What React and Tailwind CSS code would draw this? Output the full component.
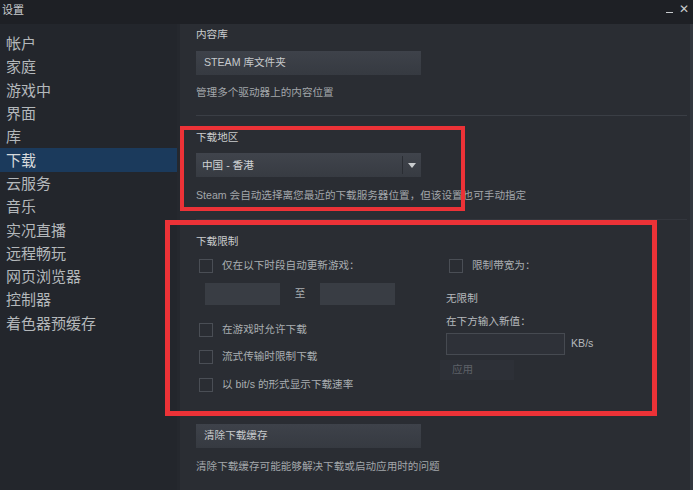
import React from "react";

const font = { fontFamily: '"Liberation Sans", "Noto Sans CJK SC", sans-serif' };

const navItems = ["帐户", "家庭", "游戏中", "界面", "库", "下载", "云服务", "音乐", "实况直播", "远程畅玩", "网页浏览器", "控制器", "着色器预缓存"];

function Checkbox() {
  return <div className="w-[14px] h-[14px] border border-[#4a4e55] bg-[#2a2d33] shrink-0" />;
}

function GrayButton({ children }) {
  return (
    <div className="w-[225px] h-[24px] bg-gradient-to-b from-[#3e424a] to-[#363a41] flex items-center pl-[8px] text-[10.6px] text-[#c6c9cc]">
      {children}
    </div>
  );
}

export default function App() {
  return (
    <div className="w-[693px] h-[490px] bg-[#2a2d33] overflow-hidden relative flex flex-col text-[#b6babd] text-[10.6px]" style={font}>
      {/* title bar */}
      <div className="h-[24px] bg-[#1e2025] flex items-center justify-between px-[2px] shrink-0">
        <span className="text-[11px] text-[#c8cbce] -mt-[4px]">设置</span>
        <div className="flex items-center gap-[6px] pr-[2px] -mt-[6px] text-[#c8cbce]">
          <span className="w-[7px] h-[1px] bg-[#c8cbce] mt-[6px]" />
          <span className="text-[12px] leading-none">✕</span>
        </div>
      </div>
      <div className="flex flex-1 min-h-0">
        {/* sidebar */}
        <div className="w-[177px] bg-[#23262c] pt-[8px] shrink-0">
          {navItems.map((n) => (
            <div
              key={n}
              className={`h-[23.3px] flex items-center pl-[6px] text-[15px] leading-none ${n === "下载" ? "bg-[#1b3a5c] text-[#d7dadc]" : "text-[#b4b8bb]"}`}
            >
              {n}
            </div>
          ))}
        </div>
        <div className="w-[3px] bg-[#25282e] shrink-0" />
        {/* main */}
        <div className="flex-1 pl-[16px] pr-[3px] flex flex-col">
          <div className="pt-[3px] text-[#c9ccce] h-[19px] flex items-center">内容库</div>
          <div className="mt-[8px]">
            <GrayButton>STEAM 库文件夹</GrayButton>
          </div>
          <div className="mt-[10px] text-[#a2a6aa]">管理多个驱动器上的内容位置</div>
          <div className="mt-[14px] h-[1px] bg-[#3a3e45]" />

          <div className="mt-[16px] text-[#c9ccce] leading-none">下载地区</div>
          <div className="mt-[11px] w-[225px] h-[24px] bg-gradient-to-b from-[#40444c] to-[#373b42] flex items-center text-[#d0d3d5]">
            <span className="pl-[6px] flex-1">中国 - 香港</span>
            <div className="w-[1px] h-[18px] bg-[#2a2d33]" />
            <div className="w-[18px] flex items-center justify-center">
              <svg width="8" height="5" viewBox="0 0 8 5"><path d="M0 0 L8 0 L4 5 Z" fill="#c9ccce" /></svg>
            </div>
          </div>
          <div className="mt-[13px] text-[#a2a6aa] leading-none">Steam 会自动选择离您最近的下载服务器位置，但该设置也可手动指定</div>
          <div className="mt-[18px] h-[1px] bg-[#33363d]" />

          <div className="mt-[16px] text-[#c9ccce] leading-none">下载限制</div>
          <div className="flex mt-[12px]">
            <div className="w-[250px] flex flex-col">
              <div className="flex items-center gap-[9px] pl-[3px] h-[14px]">
                <Checkbox />
                <span className="text-[#a9adb1]">仅在以下时段自动更新游戏：</span>
              </div>
              <div className="flex items-center mt-[10px] pl-[9px]">
                <div className="w-[75px] h-[22px] bg-[#393d44]" />
                <span className="w-[40px] text-center text-[#a9adb1]">至</span>
                <div className="w-[75px] h-[22px] bg-[#393d44]" />
              </div>
              <div className="flex items-center gap-[9px] pl-[3px] h-[14px] mt-[18px]">
                <Checkbox />
                <span className="text-[#a9adb1]">在游戏时允许下载</span>
              </div>
              <div className="flex items-center gap-[9px] pl-[3px] h-[14px] mt-[13px]">
                <Checkbox />
                <span className="text-[#a9adb1]">流式传输时限制下载</span>
              </div>
              <div className="flex items-center gap-[9px] pl-[3px] h-[14px] mt-[14px]">
                <Checkbox />
                <span className="text-[#a9adb1]">以 bit/s 的形式显示下载速率</span>
              </div>
            </div>
            <div className="flex flex-col">
              <div className="flex items-center gap-[9px] pl-[3px] h-[14px]">
                <Checkbox />
                <span className="text-[#a9adb1]">限制带宽为：</span>
              </div>
              <div className="mt-[20px] text-[#b6babd] leading-none">无限制</div>
              <div className="mt-[13px] text-[#b6babd] leading-none">在下方输入新值：</div>
              <div className="flex items-center mt-[6px]">
                <div className="w-[119px] h-[22px] bg-[#2e3138] border border-[#464a51]" />
                <span className="ml-[6px] text-[#b6babd]">KB/s</span>
              </div>
              <div className="mt-[5px] -ml-[6px] w-[74px] h-[20px] bg-[#2d3037] flex items-center pl-[12px] text-[#5d6167]">应用</div>
            </div>
          </div>
          <div className="mt-[32px]">
            <GrayButton>清除下载缓存</GrayButton>
          </div>
          <div className="mt-[13px] text-[#a2a6aa] leading-none">清除下载缓存可能能够解决下载或启动应用时的问题</div>
        </div>
        <div className="w-[3px] bg-[#33363d] shrink-0" />
      </div>

      {/* annotation boxes */}
      <div className="absolute left-[180px] top-[126px] w-[285px] h-[85px] border-[4px] border-[#ec3237]" />
      <div className="absolute left-[165px] top-[220px] w-[492px] h-[196px] border-[5px] border-[#ec3237]" />
    </div>
  );
}
